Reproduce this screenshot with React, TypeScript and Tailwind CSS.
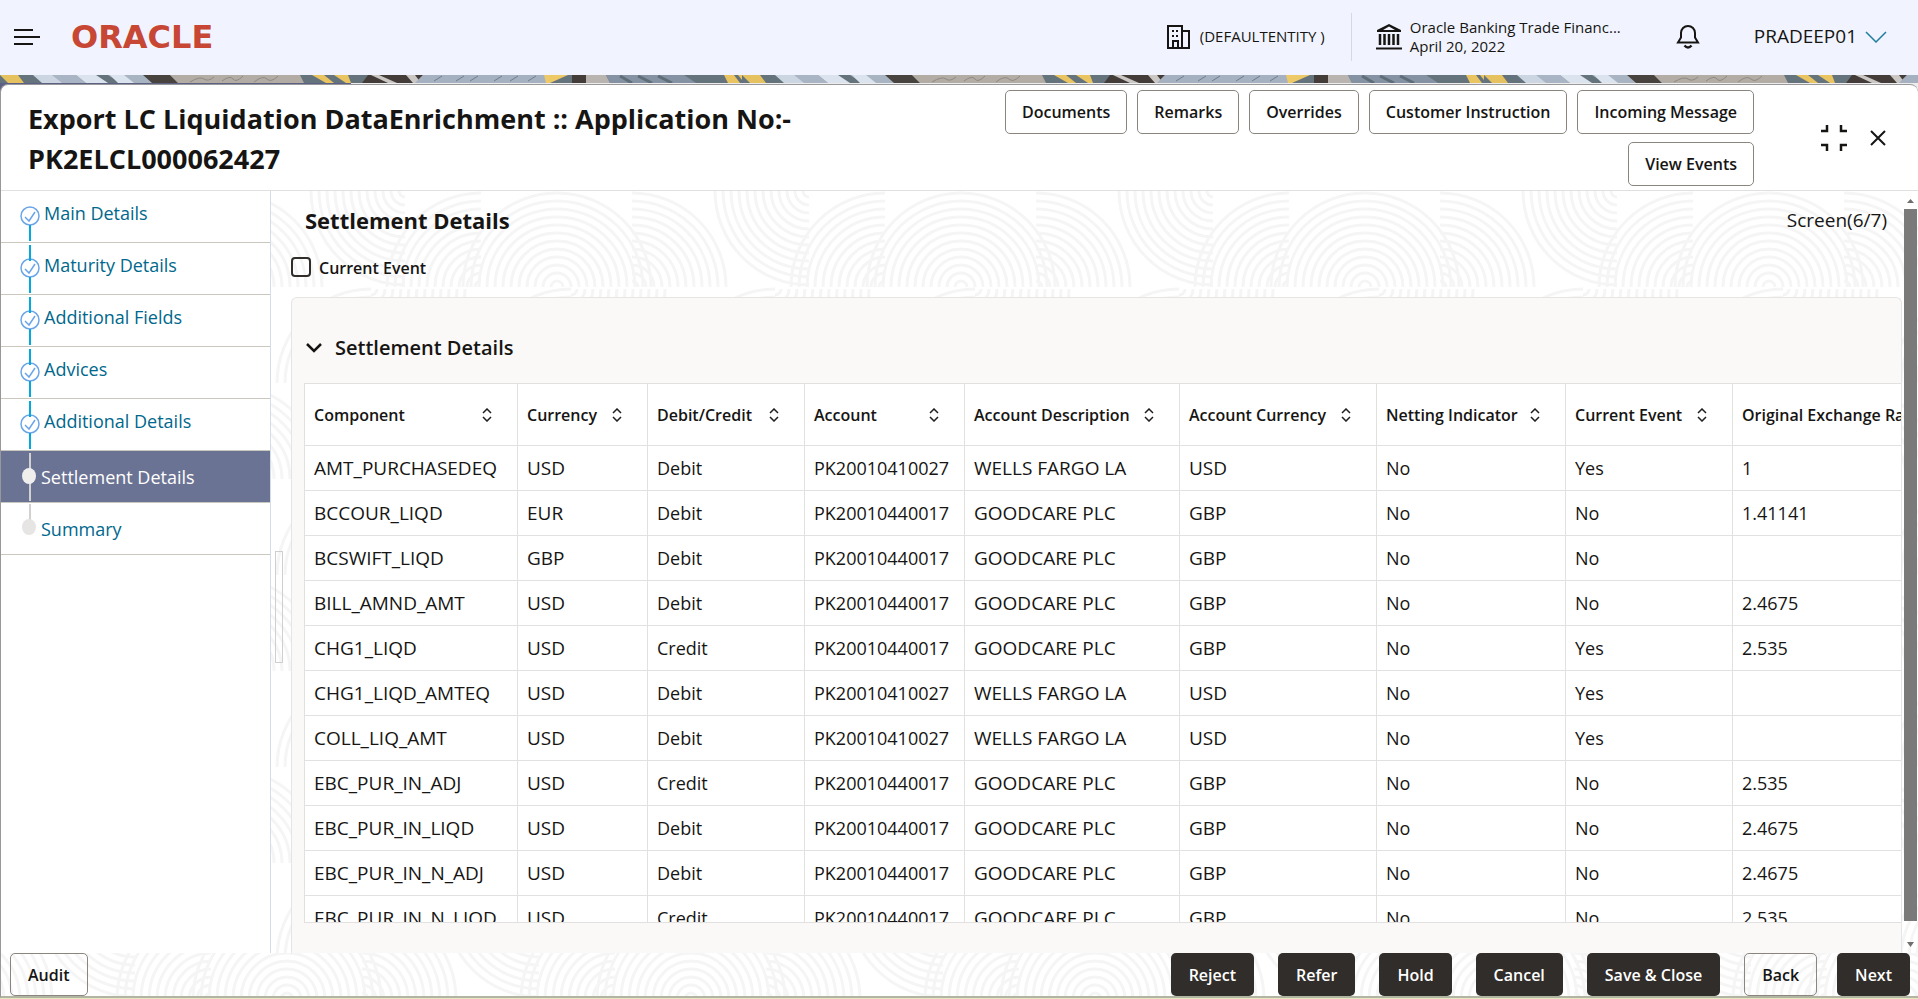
import { useState } from 'react';

type Step = { label: string; done: boolean };

const steps: Step[] = [
  { label: 'Main Details', done: true },
  { label: 'Maturity Details', done: true },
  { label: 'Additional Fields', done: true },
  { label: 'Advices', done: true },
  { label: 'Additional Details', done: true },
  { label: 'Settlement Details', done: false },
  { label: 'Summary', done: false },
];

const columns = [
  { label: 'Component', width: 'w-[213px]', cell: 'text-[19px]' },
  { label: 'Currency', width: 'w-[130px]', cell: 'text-[19px]' },
  { label: 'Debit/Credit', width: 'w-[157px]', cell: 'text-lg' },
  { label: 'Account', width: 'w-[160px]', cell: 'text-lg' },
  { label: 'Account Description', width: 'w-[215px]', cell: 'text-[19px]' },
  { label: 'Account Currency', width: 'w-[197px]', cell: 'text-[19px]' },
  { label: 'Netting Indicator', width: 'w-[189px]', cell: 'text-lg' },
  { label: 'Current Event', width: 'w-[167px]', cell: 'text-lg' },
  { label: 'Original Exchange Rate', width: 'w-[230px]', cell: 'text-lg' },
];

const rows = [
  ['AMT_PURCHASEDEQ', 'USD', 'Debit', 'PK20010410027', 'WELLS FARGO LA', 'USD', 'No', 'Yes', '1'],
  ['BCCOUR_LIQD', 'EUR', 'Debit', 'PK20010440017', 'GOODCARE PLC', 'GBP', 'No', 'No', '1.41141'],
  ['BCSWIFT_LIQD', 'GBP', 'Debit', 'PK20010440017', 'GOODCARE PLC', 'GBP', 'No', 'No', ''],
  ['BILL_AMND_AMT', 'USD', 'Debit', 'PK20010440017', 'GOODCARE PLC', 'GBP', 'No', 'No', '2.4675'],
  ['CHG1_LIQD', 'USD', 'Credit', 'PK20010440017', 'GOODCARE PLC', 'GBP', 'No', 'Yes', '2.535'],
  ['CHG1_LIQD_AMTEQ', 'USD', 'Debit', 'PK20010410027', 'WELLS FARGO LA', 'USD', 'No', 'Yes', ''],
  ['COLL_LIQ_AMT', 'USD', 'Debit', 'PK20010410027', 'WELLS FARGO LA', 'USD', 'No', 'Yes', ''],
  ['EBC_PUR_IN_ADJ', 'USD', 'Credit', 'PK20010440017', 'GOODCARE PLC', 'GBP', 'No', 'No', '2.535'],
  ['EBC_PUR_IN_LIQD', 'USD', 'Debit', 'PK20010440017', 'GOODCARE PLC', 'GBP', 'No', 'No', '2.4675'],
  ['EBC_PUR_IN_N_ADJ', 'USD', 'Debit', 'PK20010440017', 'GOODCARE PLC', 'GBP', 'No', 'No', '2.4675'],
  ['EBC_PUR_IN_N_LIQD', 'USD', 'Credit', 'PK20010440017', 'GOODCARE PLC', 'GBP', 'No', 'No', '2.535'],
];

const headerActions = [
  'Documents',
  'Remarks',
  'Overrides',
  'Customer Instruction',
  'Incoming Message',
  'View Events',
];

const radii = [6, 14, 22, 30, 38, 46, 54, 62, 70, 78, 86, 94];

function ArcPattern({ id, y }: { id: string; y: number }) {
  return (
    <svg className="absolute inset-0 w-full h-full" aria-hidden="true">
      <defs>
        <pattern id={id} width="404" height="192" y={y} patternUnits="userSpaceOnUse">
          <g fill="none" stroke="#f5f5f5" strokeWidth="3">
            {radii.map((r) => (
              <g key={r}>
                <path d={`M${286 - r} 96a${r} ${r} 0 0 1 ${2 * r} 0`} />
                <path d={`M${210 - r} 96a${r} ${r} 0 0 1 ${r} ${-r}`} />
                <path d={`M361 ${96 - r}a${r} ${r} 0 0 1 ${r} ${r}`} />
                <path d={`M-43 ${96 - r}a${r} ${r} 0 0 1 ${r} ${r}`} />
                <path d={`M${134 - r} 0a${r} ${r} 0 0 0 ${r} ${r}`} />
                <path d={`M${100 - r} 192a${r} ${r} 0 0 1 ${r} ${-r}`} />
                <path d={`M${100 + r} 98a${r} ${r} 0 0 1 ${-r} ${r}`} />
                <path d={`M${300 - r} 192a${r} ${r} 0 0 1 ${r} ${-r}`} />
                <path d={`M${300 + r} 98a${r} ${r} 0 0 1 ${-r} ${r}`} />
              </g>
            ))}
          </g>
        </pattern>
      </defs>
      <rect width="100%" height="100%" fill={`url(#${id})`} />
    </svg>
  );
}

function TextureStrip() {
  return (
    <svg className="block w-full h-2" aria-hidden="true">
      <defs>
        <pattern id="strip" width="742" height="8" patternUnits="userSpaceOnUse">
          <rect width="742" height="8" fill="#65737c" />
          <path d="M0 0h18l6 8H8z" fill="#e5c15f" />
          <path d="M33 0h30l10 8H42z" fill="#ccd5e2" />
          <path d="M52 0h24l10 8H62z" fill="#a9b5c4" />
          <path d="M76 0h20l12 8H86z" fill="#dbe3ef" />
          <path d="M108 0h40l10 8h-38z" fill="#a9b4c3" />
          <path d="M110 0h14l10 8h-16z" fill="#dbe3ef" />
          <path d="M143 0h27l8 8h-26z" fill="#49433f" />
          <path d="M170 0h130l4 8H178z" fill="#b3aca5" />
          <path d="M190 7q10-6 14-3t10-2M222 6q8-6 11-2t10-3M254 7q9-7 13-3t11-3" fill="none" stroke="#8d8882" />
          <path d="M312 0h12l10 8h-8z" fill="#e9c461" />
          <path d="M334 0h14l3 8h-5z" fill="#e9c461" />
          <path d="M368 0h55l-8 8h-53z" fill="#433c39" />
          <path d="M371 0h8l18 8h-9zM406 0h9l6 8h-8z" fill="#cbc7c4" />
          <path d="M423 0h122l3 8H415z" fill="#a5b1c1" />
          <path d="M434 6l8-5M456 6l8-5M470 6l8-5M494 6l8-5M510 6l8-5M528 6l8-5" stroke="#6e7c8c" />
          <path d="M544 0h24l-18 8h-4z" fill="#edc967" />
          <path d="M572 0h14v8h-14z" fill="#433c39" />
          <path d="M586 0h20l4 8h-24z" fill="#b9b4b0" />
          <path d="M606 0h78l12 8h-86z" fill="#8592a4" />
          <path d="M620 1l12 7M638 1l14 7M658 1l14 7" stroke="#5f6d79" strokeWidth="3" />
          <path d="M724 0h10l6 8h-12zM742 0h-4l4 5z" fill="#e9c461" />
        </pattern>
      </defs>
      <rect width="100%" height="8" fill="url(#strip)" />
    </svg>
  );
}

function SortIcon() {
  return (
    <svg width="10" height="14" viewBox="0 0 10 14" fill="none" stroke="#201e1c" strokeWidth="1.5" className="shrink-0" aria-hidden="true">
      <path d="M1 5l4-4 4 4M1 9l4 4 4-4" />
    </svg>
  );
}

function StepMarker({ step, index, active }: { step: Step; index: number; active: boolean }) {
  if (!step.done) {
    return (
      <svg width="40" height="51" className="shrink-0" aria-hidden="true">
        <path d={active ? 'M29 2v48' : 'M29 1v20'} stroke="#d2d1d0" strokeWidth="2" />
        <ellipse cx="28" cy={active ? 25 : 24} rx="7" ry="8" fill={active ? '#efeeed' : '#e6e5e4'} />
      </svg>
    );
  }
  return (
    <svg width="43" height="51" fill="none" className="shrink-0" aria-hidden="true">
      <circle cx="29" cy="25" r="9" stroke="#6ba5e7" strokeWidth="1.5" />
      <path d="M24 26l4 4 6-9" stroke="#6ba5e7" strokeWidth="1.5" />
      {index > 0 && <path d="M29 2v16" stroke="#00a9e0" strokeWidth="2" />}
      <path d="M29 34v16" stroke="#00a9e0" strokeWidth="2" />
    </svg>
  );
}

function TopBar() {
  return (
    <header className="h-[75px] shrink-0 bg-[#f1f4fe] flex items-center pb-0.5">
      <button type="button" aria-label="Toggle menu" className="ml-3.5">
        <svg width="26" height="18" stroke="#161513" strokeWidth="2" className="block">
          <path d="M0 2h19M0 9h26M0 16h19" />
        </svg>
      </button>
      <span className="ml-[31px] font-['DejaVu_Sans',sans-serif] text-[32px] leading-none font-bold text-[#c74634]">
        ORACLE
      </span>

      <div className="ml-auto flex items-center">
        <svg width="26" height="26" viewBox="0 0 26 26" fill="none" stroke="#161513" strokeWidth="2" aria-hidden="true">
          <path d="M2 2h14v22H2zM16 7h7v17h-7M7 24v-7h5v7" />
          <path d="M6 7h2M10 7h2M6 12h2M10 12h2" />
        </svg>
        <span className="ml-2 w-[151px] text-[15px]">(DEFAULTENTITY )</span>
        <div className="w-px h-12 bg-[#d5d9e2]" />
        <svg width="26" height="26" viewBox="0 0 26 26" className="ml-6" aria-hidden="true">
          <path d="M13 0l12 6v2H1V6zM13 2.500L7 6h12z" fill="#161513" fillRule="evenodd" />
          <path d="M4 10v11M8.500 10v11M13 10v11M17.500 10v11M22 10v11" stroke="#161513" strokeWidth="2.500" />
          <path d="M0 24.500h26" stroke="#161513" strokeWidth="2" />
        </svg>
        <div className="ml-2 w-[266px] text-[15px] leading-[19px]">
          <div>Oracle Banking Trade Financ...</div>
          <div>April 20, 2022</div>
        </div>
        <button type="button" aria-label="Notifications">
          <svg width="24" height="26" viewBox="0 0 24 26" fill="none" stroke="#161513" strokeWidth="2" className="block">
            <path d="M2 18.500h20l-3-5V9a7 7 0 0 0-14 0v4.500z" />
            <path d="M8.500 21.500q3.500 4 7 0" strokeWidth="2.500" />
          </svg>
        </button>
        <button type="button" className="ml-[54px] mr-[31px] flex items-center gap-2 text-[19px]">
          PRADEEP01
          <svg width="22" height="12" fill="none" stroke="#227e9e" strokeWidth="1.500" aria-hidden="true">
            <path d="M1 1l10 10L21 1" />
          </svg>
        </button>
      </div>
    </header>
  );
}

function Footer() {
  const dark = 'h-[43px] px-[18px] rounded-[5px] bg-[#312d2a] text-white text-base font-semibold';
  const light = 'h-[43px] px-[17px] rounded-[5px] border border-[#8b8580] text-base font-semibold';
  return (
    <footer className="relative shrink-0 h-[43px] bg-white">
      <ArcPattern id="arcs-footer" y={-50} />
      <div className="relative flex items-center justify-between pl-[9px] pr-2">
        <button type="button" className={light}>Audit</button>
        <div className="flex gap-6">
          <button type="button" className={dark}>Reject</button>
          <button type="button" className={dark}>Refer</button>
          <button type="button" className={dark}>Hold</button>
          <button type="button" className={dark}>Cancel</button>
          <button type="button" className={dark}>Save &amp; Close</button>
          <div className="flex gap-5">
            <button type="button" className={light}>Back</button>
            <button type="button" className={dark}>Next</button>
          </div>
        </div>
      </div>
    </footer>
  );
}

export default function App() {
  const [current, setCurrent] = useState(5);
  const [currentEvent, setCurrentEvent] = useState(false);
  const [open, setOpen] = useState(true);

  return (
    <div className="h-screen flex flex-col overflow-hidden bg-white text-[#161513] font-['Open_Sans','Noto_Sans',sans-serif]">
      <TopBar />
      <TextureStrip />
      <div className="flex-1 min-h-0 flex flex-col bg-[linear-gradient(to_right,#5b6084_351px,#ededed_351px)] pt-px">
        <div className="flex-1 min-h-0 flex flex-col bg-white border border-r-0 border-b-2 border-[#98989a] border-b-[#b3b5a3] rounded-t-lg overflow-hidden">
          {/* Title bar */}
          <div className="shrink-0 flex items-center justify-between border-b border-[#e0e0e0] pl-[27px] pr-8">
            <h1 className="w-[800px] pt-0.5 text-[27px] leading-10 font-bold">
              Export LC Liquidation DataEnrichment :: Application No:-
              <br />
              PK2ELCL000062427
            </h1>
            <div className="flex items-center">
              <div className="w-[790px] pt-[5px] pb-1 flex flex-wrap justify-end gap-x-2.5 gap-y-2">
                {headerActions.map((label) => (
                  <button
                    key={label}
                    type="button"
                    className="h-11 px-4 border border-[#8b8580] rounded-[5px] text-base font-semibold"
                  >
                    {label}
                  </button>
                ))}
              </div>
              <button type="button" aria-label="Collapse" className="ml-[67px]">
                <svg width="26" height="26" fill="none" stroke="#161513" strokeWidth="2.500" className="block">
                  <path d="M0 6h6V0M20 0v6h6M0 20h6v6M20 26v-6h6" />
                </svg>
              </button>
              <button type="button" aria-label="Close" className="ml-[23px]">
                <svg width="16" height="16" stroke="#161513" strokeWidth="2" className="block">
                  <path d="M1 1l14 14M15 1L1 15" />
                </svg>
              </button>
            </div>
          </div>

          <div className="flex-1 min-h-0 flex">
            {/* Wizard steps */}
            <nav className="w-[270px] shrink-0 border-r border-[#d3dfe8] bg-white">
              {steps.map((step, i) => (
                <button
                  key={step.label}
                  type="button"
                  onClick={() => setCurrent(i)}
                  className={`w-full h-[52px] flex items-center border-b border-[#c9c7be] text-lg ${
                    i === current ? 'bg-[#6b7394] text-white' : 'text-[#00688c]'
                  }`}
                >
                  <StepMarker step={step} index={i} active={i === current} />
                  <span className={step.done ? 'pb-2' : ''}>{step.label}</span>
                </button>
              ))}
            </nav>

            <main className="relative flex-1 min-w-0">
              <ArcPattern id="arcs-main" y={0} />
              <div className="relative h-full flex">
                <div className="w-5 shrink-0 flex items-center pl-1 pt-[70px]">
                  <div className="w-2 h-[112px] border border-[#cfcfcf]" />
                </div>

                <div className="flex-1 min-w-0 flex flex-col">
                  <div className="flex items-center justify-between h-[58px] pl-3.5 pr-[15px]">
                    <h2 className="text-[22px] font-bold">Settlement Details</h2>
                    <span className="text-[19px]">Screen(6/7)</span>
                  </div>
                  <label className="h-12 flex items-start gap-2 pt-2 text-base leading-[22px] font-semibold">
                    <input
                      type="checkbox"
                      checked={currentEvent}
                      onChange={(e) => setCurrentEvent(e.target.checked)}
                      className="appearance-none w-5 h-5 border-2 border-[#312d2a] rounded-sm checked:bg-[#312d2a]"
                    />
                    Current Event
                  </label>

                  <section className="flex-1 min-h-0 flex flex-col bg-[#faf9f8] border border-b-0 border-[#e6e5e4] rounded-t-md pl-3 pb-[30px]">
                    <button
                      type="button"
                      onClick={() => setOpen(!open)}
                      className="h-[85px] pt-3.5 pl-px shrink-0 flex items-center gap-3 text-xl font-semibold"
                    >
                      <svg width="18" height="12" fill="none" stroke="#161513" strokeWidth="2.500" className={open ? '' : '-rotate-90'}>
                        <path d="M2 2l7 7 7-7" />
                      </svg>
                      Settlement Details
                    </button>

                    {open && (
                      <div className="flex-1 min-h-0 overflow-hidden border border-r-0 border-[#e2e1e0] bg-white">
                        <table className="table-fixed w-[1658px] border-separate border-spacing-0">
                          <thead>
                            <tr className="h-[62px]">
                              {columns.map((col) => (
                                <th
                                  key={col.label}
                                  className={`${col.width} pl-[9px] pr-[25px] border-r border-b border-[#e2e1e0] text-base font-semibold text-left whitespace-nowrap`}
                                >
                                  <div className="flex items-center justify-between">
                                    {col.label}
                                    <SortIcon />
                                  </div>
                                </th>
                              ))}
                            </tr>
                          </thead>
                          <tbody>
                            {rows.map((row) => (
                              <tr key={row[0]} className="h-[45px]">
                                {row.map((value, i) => (
                                  <td
                                    key={columns[i].label}
                                    className={`${columns[i].cell} pl-[9px] py-0 border-r border-b border-[#e2e1e0] whitespace-nowrap`}
                                  >
                                    {value}
                                  </td>
                                ))}
                              </tr>
                            ))}
                          </tbody>
                        </table>
                      </div>
                    )}
                  </section>
                </div>

                {/* Scroll track */}
                <div className="w-4 shrink-0 flex flex-col items-center pt-2 pb-1.5">
                  <svg width="7" height="4"><path d="M0 4l3.500-4L7 4z" fill="#6f6f6f" /></svg>
                  <div className="w-[13px] h-[712px] mt-1.5 bg-[#7a7a7a]" />
                  <svg width="7" height="5" className="mt-auto"><path d="M0 0l3.500 5L7 0z" fill="#6f6f6f" /></svg>
                </div>
              </div>
            </main>
          </div>

          <Footer />
        </div>
      </div>
      <div className="h-px shrink-0 bg-[#e6e6c0]" />
    </div>
  );
}
